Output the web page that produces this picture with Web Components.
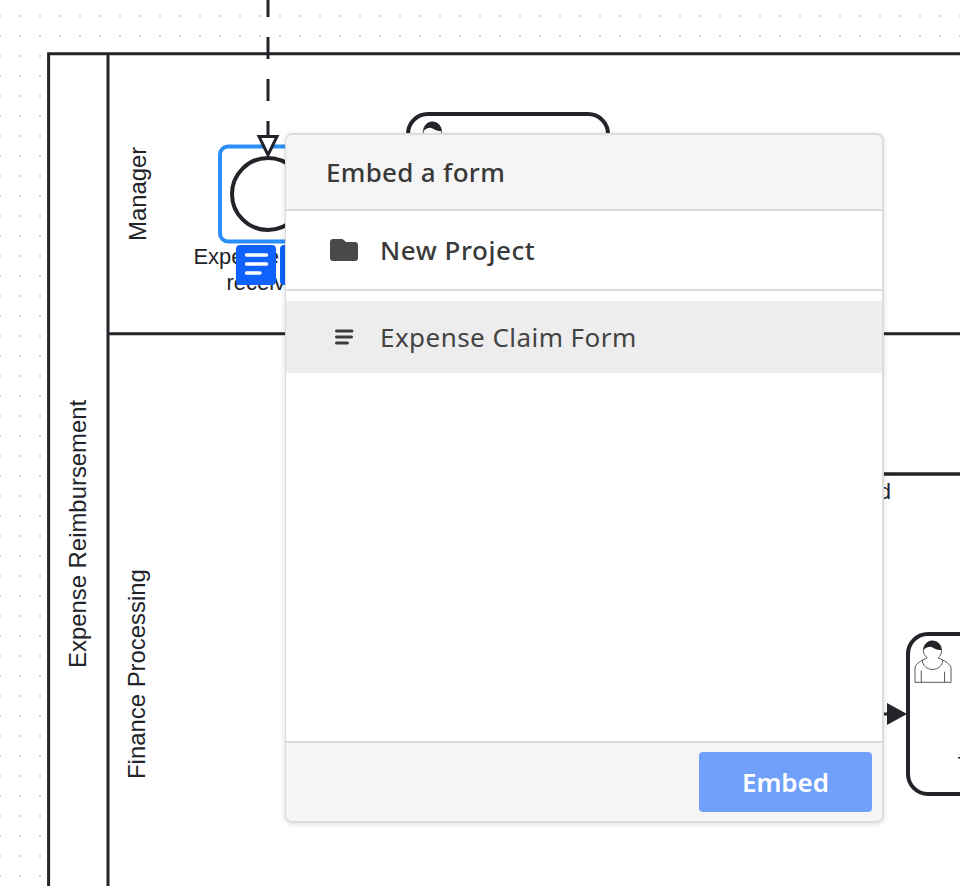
<!DOCTYPE html>
<html>
<head>
<meta charset="utf-8">
<title>Embed a form</title>
<style>
    html, body { margin: 0; background: #fff; }
</style>
</head>
<body>
<app-screen>
    <bpmn-canvas slot="canvas"></bpmn-canvas>
    <embed-dialog slot="dialog" heading="Embed a form" action="Embed">
        <folder-row>New Project</folder-row>
        <form-row slot="list">Expense Claim Form</form-row>
    </embed-dialog>
</app-screen>
<script>
const USER_ICON = `
    <path fill="#fff" stroke="#3a3c42" stroke-width="0.4" d="m 15,12 c 0.909,-0.845 1.594,-2.049 1.594,-3.385 0,-2.554 -1.805,-4.622 -4.357,-4.622 -2.552,0 -4.288,2.068 -4.288,4.622 0,1.348 0.974,2.562 1.896,3.405 -0.529,0.187 -5.669,2.097 -5.794,4.756 v 6.718 h 17 v -6.718 c 0,-2.298 -5.528,-4.595 -6.051,-4.776 z m -8,6 l 0,5.5 m 11,0 l 0,-5"/>
    <path fill="none" stroke="#3a3c42" stroke-width="0.4" d="m 17.162,13.009 c 0,2.447 -2.158,4.431 -4.821,4.431 -2.663,0 -4.822,-1.984 -4.822,-4.431"/>
    <path fill="#22242a" d="m 8.1,8.2 c 0,0 2.25,-2.358 4.27,-1.177 2.024,1.181 4.221,1.537 4.124,0.965 -0.098,-0.57 -0.117,-3.79 -4.191,-4.13 -3.57,0.001 -4.103,3.512 -4.203,4.342 z"/>`;

class AppScreen extends HTMLElement {
    constructor() {
        super();
        this.attachShadow({ mode : "open" });
    }

    connectedCallback() {
        this.shadowRoot.innerHTML = `
        <style>
            :host {
                display : block;
                position : relative;
                width : 960px;
                height : 886px;
                overflow : hidden;
                background : #fff;
            }
            .over {
                position : absolute;
                left : 285px;
                top : 133px;
            }
        </style>
        <slot name="canvas"></slot>
        <div class="over"><slot name="dialog"></slot></div>
        `;
    }
}

class BpmnCanvas extends HTMLElement {
    constructor() {
        super();
        this.attachShadow({ mode : "open" });
    }

    connectedCallback() {
        this.shadowRoot.innerHTML = `
        <style>
            :host { display : block; width : 960px; height : 886px; }
            svg { display : block; }
            text {
                font-family : "Liberation Sans", Arial, sans-serif;
                font-size : 22px;
                fill : #22242a;
            }
            .lane { font-size : 23.9px; }
            .line { fill : none; stroke : #22242a; stroke-width : 3; }
            .shape { fill : #fff; stroke : #22242a; stroke-width : 4; }
        </style>
        <svg width="960" height="886" viewBox="0 0 960 886">
            <defs>
                <pattern id="dots" width="20" height="20" patternUnits="userSpaceOnUse" x="-1" y="-5">
                    <rect x="0" y="0" width="2" height="2" fill="#d6d6d6"/>
                </pattern>
            </defs>
            <rect width="960" height="886" fill="url(#dots)"/>

            <rect x="48" y="54" width="960" height="900" fill="#fff" fill-opacity="0.95"/>
            <rect x="108" y="54" width="900" height="900" fill="#fff" fill-opacity="0.6"/>
            <path class="line" d="M48.600 900V53.800H960M108 53.800V900M108 333.800H960"/>
            <path class="line" d="M884 474H960" style="stroke-width:3.5"/>

            <text class="lane" transform="translate(86 668) rotate(-90)">Expense Reimbursement</text>
            <text class="lane" transform="translate(146 241) rotate(-90)">Manager</text>
            <text class="lane" transform="translate(145 779) rotate(-90)">Finance Processing</text>

            <path class="line" stroke-dasharray="22 20" d="M268 -5V136"/>

            <rect x="220" y="146.500" width="96" height="95" rx="8" fill="none" stroke="#2a8df8" stroke-width="4"/>
            <circle class="shape" cx="268" cy="194" r="36"/>
            <path d="M259 136.500H277L268 155Z" fill="#fff" stroke="#22242a" stroke-width="3"/>

            <text x="268" y="264" text-anchor="middle">Expense report</text>
            <text x="268" y="290" text-anchor="middle">received</text>

            <rect x="236" y="245" width="40" height="40" rx="4" fill="#0f62fe"/>
            <rect x="280" y="245" width="40" height="40" rx="4" fill="#0f62fe"/>
            <path d="M246.500 255H266.500M246.500 264H266.500M246.500 273H260" stroke="#fff" stroke-width="3.500" stroke-linecap="round"/>

            <rect class="shape" x="408" y="114" width="200" height="160" rx="20"/>
            <g transform="translate(406.400 113.500) scale(2.12)">${USER_ICON}</g>

            <text x="891" y="499" text-anchor="end">Approved</text>

            <path d="M884 714H890" class="line"/>
            <path d="M887 703L907 714L887 725Z" fill="#22242a"/>
            <rect class="shape" x="908" y="634" width="200" height="160" rx="20"/>
            <g transform="translate(906.400 632.500) scale(2.12)">${USER_ICON}</g>
            <rect x="958" y="757" width="2" height="1.500" fill="#22242a"/>
        </svg>
        `;
    }
}

class EmbedDialog extends HTMLElement {
    constructor() {
        super();
        this.attachShadow({ mode : "open" });
    }

    connectedCallback() {
        this.shadowRoot.innerHTML = `
        <style>
            :host {
                display : flex;
                flex-direction : column;
                box-sizing : border-box;
                width : 599px;
                height : 690px;
                background : #fff;
                border : 2px solid #dcdcdc;
                border-left-width : 1px;
                border-radius : 8px;
                box-shadow : 0 1px 5px rgba(0, 0, 0, 0.15);
                overflow : hidden;
                font-family : "Noto Sans", sans-serif;
                color : #393939;
            }
            header {
                box-sizing : border-box;
                height : 76px;
                flex : none;
                display : flex;
                align-items : center;
                padding-left : 40px;
                background : #f5f5f5;
                border-bottom : 2px solid #dcdcdc;
                font-size : 26px;
                font-weight : 500;
                letter-spacing : 0.3px;
            }
            .folders {
                flex : none;
                height : 78px;
                border-bottom : 2px solid #dcdcdc;
            }
            .list {
                flex : 1;
                padding-top : 10px;
            }
            footer {
                box-sizing : border-box;
                height : 80px;
                flex : none;
                display : flex;
                justify-content : flex-end;
                align-items : flex-start;
                padding : 9px 10px 0 0;
                background : #f5f5f5;
                border-top : 2px solid #dcdcdc;
            }
            button {
                width : 173px;
                height : 60px;
                background : #70a0f9;
                color : #fff;
                border : none;
                border-radius : 4px;
                font : 600 26px "Noto Sans", sans-serif;
                padding : 0;
            }
        </style>
        <header>${this.getAttribute('heading')}</header>
        <div class="folders"><slot></slot></div>
        <div class="list"><slot name="list"></slot></div>
        <footer><button type="button">${this.getAttribute('action')}</button></footer>
        `;
    }
}

class FolderRow extends HTMLElement {
    constructor() {
        super();
        this.attachShadow({ mode : "open" });
    }

    connectedCallback() {
        this.shadowRoot.innerHTML = `
        <style>
            :host {
                display : flex;
                align-items : center;
                height : 78px;
                font-size : 26px;
                font-weight : 500;
                letter-spacing : 0.55px;
                color : #393939;
            }
            svg { margin-left : 44px; margin-right : 22px; flex : none; }
        </style>
        <svg width="28" height="22" viewBox="0 0 28 22">
            <path fill="#4a4a4a" d="M3 0H11.500C12.500 0 13.200 .4 13.800 1L16 3H25C26.700 3 28 4.300 28 6V19C28 20.700 26.700 22 25 22H3C1.300 22 0 20.700 0 19V3C0 1.300 1.300 0 3 0Z"/>
        </svg>
        <slot></slot>
        `;
    }
}

class FormRow extends HTMLElement {
    constructor() {
        super();
        this.attachShadow({ mode : "open" });
    }

    connectedCallback() {
        this.shadowRoot.innerHTML = `
        <style>
            :host {
                display : flex;
                align-items : center;
                height : 72px;
                background : #ededed;
                font-size : 26px;
                letter-spacing : 0.45px;
                color : #444;
            }
            svg { margin-left : 49px; margin-right : 26px; flex : none; }
        </style>
        <svg width="19" height="16" viewBox="0 0 19 16">
            <path d="M1.500 2H17M1.500 8H16.500M1.500 14H12.500" stroke="#3c3c3c" stroke-width="3" stroke-linecap="round" fill="none"/>
        </svg>
        <slot></slot>
        `;
    }
}

window.customElements.define('app-screen', AppScreen);
window.customElements.define('bpmn-canvas', BpmnCanvas);
window.customElements.define('embed-dialog', EmbedDialog);
window.customElements.define('folder-row', FolderRow);
window.customElements.define('form-row', FormRow);
</script>
</body>
</html>
